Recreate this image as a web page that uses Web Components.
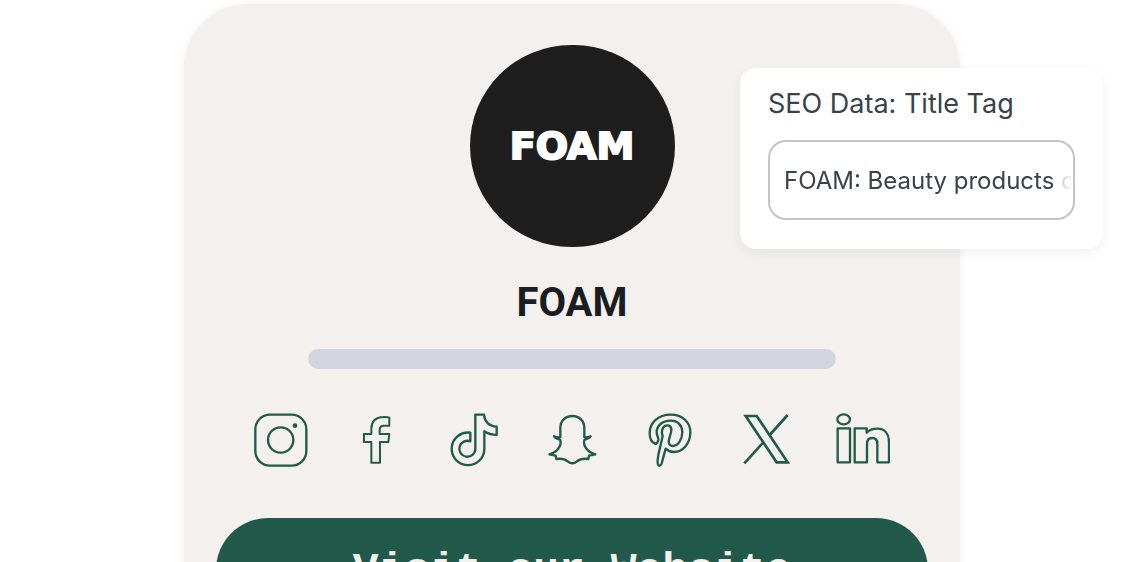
<!DOCTYPE html>
<html lang="en">
<head>
<meta charset="utf-8">
<title>FOAM</title>
<style>
body{
   margin:0;
   height:100vh;
   overflow:hidden;
   background:white;
   font-family:Inter, "Liberation Sans", sans-serif;
}
</style>
</head>
<body>

<profile-card>
   <brand-avatar slot="avatar">FOAM</brand-avatar>
   <span slot="name">FOAM</span>
   <social-links slot="links"></social-links>
   <cta-button slot="action">Visit our Website</cta-button>
   <seo-field slot="overlay" value="FOAM: Beauty products o">SEO Data: Title Tag</seo-field>
</profile-card>

<script>
window.customElements.define('profile-card',
   class extends HTMLElement {

   constructor(){super(); this.attachShadow({mode:'open'});
      this.shadowRoot.innerHTML = `
<style>
:host{
   display:block;
   padding:4px 16px 0;
}
main{
   position:relative;
   display:flex;
   flex-direction:column;
   align-items:center;
   box-sizing:border-box;
   max-width:776px;
   margin:0 auto;
   padding:41px 32px 48px;
   border-radius:64px;
   background:#f4f0ed;
   box-shadow:0 0 8px rgba(0,0,0,.06);
}
h1{
   margin:32px 0 22px;
   font:bold 40px/48px Roboto, "Liberation Sans", sans-serif;
   color:#1a1d21;
}
.bar{
   width:calc(100% - 184px);
   height:20px;
   border-radius:10px;
   background:#d2d5de;
}
slot[name="links"]::slotted(*){
   align-self:stretch;
   margin:44px 38px 51px;
}
slot[name="action"]::slotted(*){
   align-self:stretch;
}
/* floats over the right edge of the card */
slot[name="overlay"]::slotted(*){
   position:absolute;
   top:64px;
   right:-143px;
}
</style>
<main>
   <slot name="avatar"></slot>
   <h1><slot name="name"></slot></h1>
   <div class="bar"></div>
   <slot name="links"></slot>
   <slot name="action"></slot>
   <slot name="overlay"></slot>
</main>
   `;
   }
})

window.customElements.define('brand-avatar',
   class extends HTMLElement {

   constructor(){super(); this.attachShadow({mode:'open'});
      this.shadowRoot.innerHTML = `
<style>
:host{
   display:flex;
   align-items:center;
   justify-content:center;
   width:205px;
   height:202px;
   border-radius:101px;
   background:#1e1e1e;
   color:white;
   font:bold 38px/40px "DejaVu Sans", sans-serif;
   -webkit-text-stroke:2px white;
}
</style>
<slot></slot>
   `;
   }
})

const icons = {
   Instagram: ["42 39", `<rect x="46" y="44" width="153" height="153" rx="44"/>
      <circle cx="122" cy="120" r="38"/><circle class="dot" cx="165" cy="77" r="7"/>`],
   Facebook: ["333 39", `<path d="M448 53V77H432Q419 77 419 90V102H448L445 126H420V188H394V126H372V102H394V86Q395 52 430 51Q440 50 448 53Z"/>`],
   TikTok: ["54 39", `<path d="M136 44H162C163 64 178 79 200 80V105C184 105 172 100 163 94V147A49 49 0 1 1 121 98V124A24 24 0 1 0 136 147Z"/>`],
   Snapchat: ["345 39", `<path d="M427 48C406 48 391 63 391 84V112Q381 113 372 109Q375 115 391 120C396 138 380 158 358 163L377 167L379 177C394 175 403 176 413 184Q427 196 441 184C451 176 460 175 475 177L477 167L496 163C474 158 458 138 463 120Q479 115 482 109Q473 113 463 112V84C463 63 448 48 427 48Z"/>`],
   Pinterest: ["36 39", `<path d="M75 131C65 127 59 114 59 99C59 68 85 44 122 44C158 44 181 67 181 97C181 131 158 156 131 156C120 156 113 152 107 146L95 190Q92 198 87 197Q82 195 83 180Q84 165 90 143L98 108Q94 99 97 88C100 78 109 74 117 77C125 81 125 89 123 97L117 119C114 132 120 138 128 138C145 138 157 117 157 96C157 76 143 62 122 62C97 62 80 77 80 97C80 108 86 112 85 119C83 128 80 132 75 131Z"/>`],
   X: ["327 39", `<g stroke-width="8" stroke-linejoin="miter"><path d="M347 48H380L473 187H440Z"/><path d="M473 45L419 105M343 190L400 127"/></g>`],
   LinkedIn: ["618 39", `<ellipse cx="641" cy="58" rx="19" ry="15"/><rect x="623" y="85" width="37" height="102"/>
      <path d="M674 85H710V98C718 90 728 86 742 86C765 86 777 102 777 127V187H742V131C742 119 736 114 727 114C717 114 711 121 711 132V187H674Z"/>`]
};

window.customElements.define('social-links',
   class extends HTMLElement {

   constructor(){super(); this.attachShadow({mode:'open'});
      const links = Object.entries(icons).map(([name, [origin, shape]]) => `
<a href="#" aria-label="${name}"><svg viewBox="${origin} 162 162" aria-hidden="true">${shape}</svg></a>`);

      this.shadowRoot.innerHTML = `
<style>
:host{
   display:block;
}
nav{
   display:flex;
   justify-content:space-between;
}
a, svg{
   display:block;
   width:54px;
   height:54px;
}
svg{
   fill:none;
   stroke:#215a4a;
   stroke-width:7;
   stroke-linejoin:round;
}
.dot{
   fill:#215a4a;
   stroke:none;
}
a[aria-label="Facebook"] svg{
   stroke-width:6;
}
</style>
<nav>${links.join("")}</nav>
   `;
   }
})

window.customElements.define('cta-button',
   class extends HTMLElement {

   constructor(){super(); this.attachShadow({mode:'open'});
      this.shadowRoot.innerHTML = `
<style>
:host{
   display:block;
}
button{
   width:100%;
   padding:28px 24px;
   border:none;
   border-radius:52px;
   background:#215a4a;
   color:#f4f0ed;
   font:bold 43px/50px "Liberation Mono", monospace;
}
</style>
<button type="button"><slot></slot></button>
   `;
   }
})

window.customElements.define('seo-field',
   class extends HTMLElement {

   constructor(){super(); this.attachShadow({mode:'open'});
      this.shadowRoot.innerHTML = `
<style>
:host{
   display:block;
   box-sizing:border-box;
   width:363px;
   padding:20px 28px 29px;
   border-radius:16px;
   background:white;
   color:#38424b;
   box-shadow:0 4px 12px rgba(0,0,0,.06);
}
label{
   display:block;
   margin-bottom:20px;
   font-size:27px;
   line-height:32px;
}
.box{
   border:2px solid #c4c4c4;
   border-radius:18px;
}
input{
   display:block;
   box-sizing:border-box;
   width:100%;
   height:76px;
   padding:0 0 0 14px;
   border:none;
   background:none;
   color:inherit;
   font:24px/32px Inter, "Liberation Sans", sans-serif;
   -webkit-mask-image:linear-gradient(to right, black 282px, rgba(0,0,0,.3) 290px, transparent);
   mask-image:linear-gradient(to right, black 282px, rgba(0,0,0,.3) 290px, transparent);
}
</style>
<label for="title"><slot></slot></label>
<div class="box"><input id="title" type="text"></div>
   `;
   }

   connectedCallback(){
      this.shadowRoot.querySelector("input").value = this.getAttribute("value") || "";
   }
})
</script>
</body>
</html>
